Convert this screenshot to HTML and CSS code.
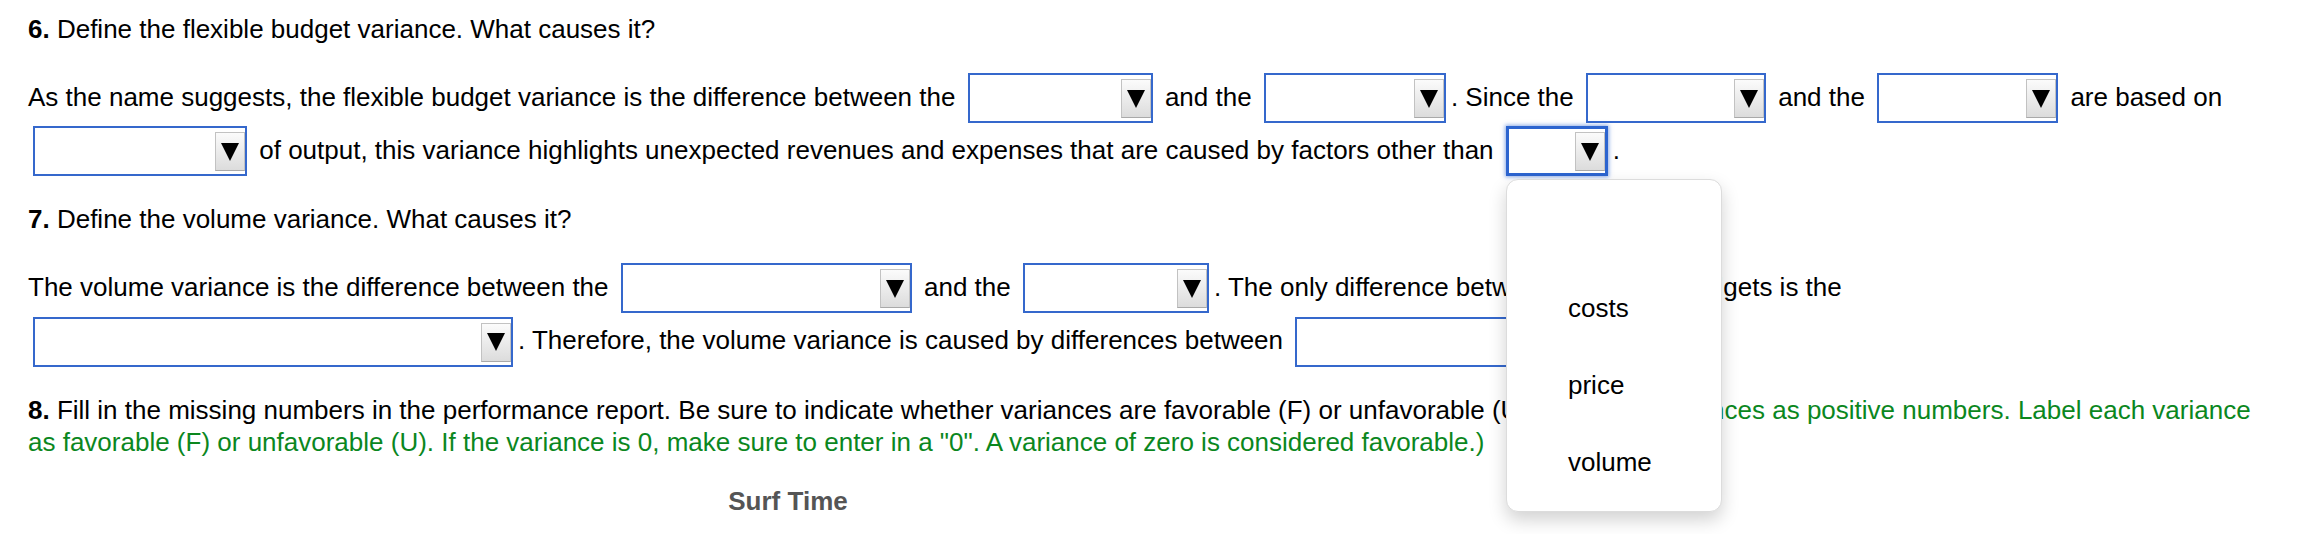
FILE: index.html
```html
<!DOCTYPE html>
<html lang="en">
<head>
<meta charset="utf-8">
<title>Flexible budget questions</title>
<link rel="stylesheet" href="styles.css">
</head>
<body>
<div class="page">
  <section class="question">
    <p class="q-title"><b>6.</b> Define the flexible budget variance. What causes it?</p>
    <p class="q-body">As the name suggests, the flexible budget variance is the difference between the <span class="dd w185"><span class="dd-btn"></span></span> and the <span class="dd w182"><span class="dd-btn"></span></span>. Since the <span class="dd w180"><span class="dd-btn"></span></span> and the <span class="dd w181"><span class="dd-btn"></span></span> are based on <span class="dd w214"><span class="dd-btn"></span></span> of output, this variance highlights unexpected revenues and expenses that are caused by factors other than <span class="dd w102 focused"><span class="dd-btn"></span></span>.</p>
  </section>
  <section class="question">
    <p class="q-title"><b>7.</b> Define the volume variance. What causes it?</p>
    <p class="q-body">The volume variance is the difference between the <span class="dd w291"><span class="dd-btn"></span></span> and the <span class="dd w186"><span class="dd-btn"></span></span>. The only difference between these two budgets is the <span class="dd w480"><span class="dd-btn"></span></span>. Therefore, the volume variance is caused by differences between <span class="dd w300"><span class="dd-btn"></span></span>.</p>
  </section>
  <section class="question">
    <p class="q-title"><b>8.</b> Fill in the missing numbers in the performance report. Be sure to indicate whether variances are favorable (F) or unfavorable (U). <span class="note">(Enter all variances as positive numbers. Label each variance as favorable (F) or unfavorable (U). If the variance is 0, make sure to enter in a "0". A variance of zero is considered favorable.)</span></p>
    <div class="report-title">Surf Time</div>
  </section>

  <ul class="menu">
    <li></li>
    <li>costs</li>
    <li>price</li>
    <li>volume</li>
  </ul>
</div>
</body>
</html>
```

FILE: styles.css
```css
* { box-sizing: border-box; }

html, body {
  margin: 0;
  padding: 0;
  background: #fff;
}

body {
  font-family: "Liberation Sans", Arial, Helvetica, sans-serif;
  font-size: 26px;
  color: #000;
}

.page {
  position: relative;
  width: 2316px;
  height: 534px;
  overflow: hidden;
  padding: 13px 0 0 28px;
  display: flex;
  flex-direction: column;
  gap: 26px;
}

.question {
  width: 2232px;
  display: flex;
  flex-direction: column;
  gap: 26px;
}

.question p {
  margin: 0;
}

.q-title {
  line-height: 32px;
}

.q-body {
  line-height: 52px;
}

.note {
  color: #0b871e;
}

.dd {
  display: inline-flex;
  justify-content: flex-end;
  align-items: center;
  height: 50px;
  margin: 0 5px;
  vertical-align: middle;
  background: #fff;
  border: 2px solid #3568cc;
  position: relative;
  top: -1px;
}

.dd.focused {
  border-width: 3px;
  border-color: #2c64cf;
  box-shadow: 0 0 4px 1px rgba(44, 100, 207, 0.55);
}

.dd-btn {
  width: 30px;
  height: 39px;
  margin-top: 1px;
  border: 1px solid #c2c2c2;
  border-bottom-color: #a9a9a9;
  background: linear-gradient(#fbfbfb, #dcdcdc);
  display: flex;
  align-items: center;
  justify-content: center;
}

.dd-btn::after {
  content: "";
  width: 0;
  height: 0;
  border-left: 9px solid transparent;
  border-right: 9px solid transparent;
  border-top: 18px solid #000;
}

.w102 { width: 102px; }
.w180 { width: 180px; }
.w181 { width: 181px; }
.w182 { width: 182px; }
.w185 { width: 185px; }
.w186 { width: 186px; }
.w214 { width: 214px; }
.w291 { width: 291px; }
.w300 { width: 300px; }
.w480 { width: 480px; }

.report-title {
  width: 1520px;
  text-align: center;
  font-weight: bold;
  color: #555;
  line-height: 32px;
  margin-top: 1px;
}

.menu {
  position: absolute;
  left: 1506px;
  top: 179px;
  width: 216px;
  height: 333px;
  margin: 0;
  padding: 13px 0 0 0;
  list-style: none;
  background: #fff;
  border: 1px solid #dcdcdc;
  border-radius: 12px;
  box-shadow: 0 8px 18px rgba(0, 0, 0, 0.18);
}

.menu li {
  height: 77px;
  line-height: 77px;
  padding-left: 61px;
}
```
